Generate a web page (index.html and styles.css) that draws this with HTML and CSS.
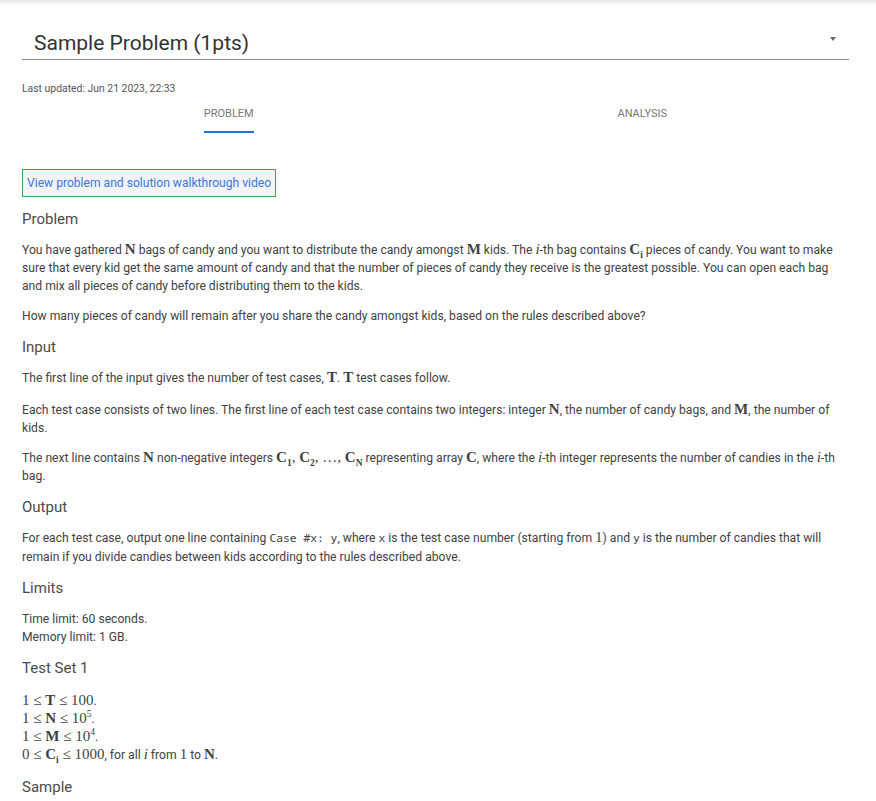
FILE: index.html
```html
<!DOCTYPE html>
<html lang="en">
<head>
<meta charset="utf-8">
<title>Sample Problem</title>
<link rel="stylesheet" href="styles.css">
</head>
<body>
<div class="topshade"></div>
<main class="page">
  <div class="select">
    <span class="select-text">Sample Problem (1pts)</span>
    <span class="select-arrow"></span>
  </div>
  <div class="updated">Last updated: Jun 21 2023, 22:33</div>
  <nav class="tabs">
    <div class="tab"><span class="tab-label active">PROBLEM</span></div>
    <div class="tab"><span class="tab-label">ANALYSIS</span></div>
  </nav>
  <section class="panel">
    <a class="video-link" href="#">View problem and solution walkthrough video</a>
    <h3>Problem</h3>
    <p>You have gathered <span class="m b">N</span> bags of candy and you want to distribute the candy amongst <span class="m b">M</span> kids. The <span class="m i">i</span>-th bag contains <span class="m b">C<sub>i</sub></span> pieces of candy. You want to make sure that every kid get the same amount of candy and that the number of pieces of candy they receive is the greatest possible. You can open each bag and mix all pieces of candy before distributing them to the kids.</p>
    <p>How many pieces of candy will remain after you share the candy amongst kids, based on the rules described above?</p>
    <h3>Input</h3>
    <p>The first line of the input gives the number of test cases, <span class="m b">T</span>. <span class="m b">T</span> test cases follow.</p>
    <p class="gap-lg">Each test case consists of two lines. The first line of each test case contains two integers: integer <span class="m b">N</span>, the number of candy bags, and <span class="m b">M</span>, the number of kids.</p>
    <p>The next line contains <span class="m b">N</span> non-negative integers <span class="m"><b>C<sub>1</sub></b>, <b>C<sub>2</sub></b>, …, <b>C<sub>N</sub></b></span> representing array <span class="m b">C</span>, where the <span class="m i">i</span>-th integer represents the number of candies in the <span class="m i">i</span>-th bag.</p>
    <h3>Output</h3>
    <p>For each test case, output one line containing <code>Case #x: y</code>, where <code>x</code> is the test case number (starting from <span class="m">1</span>) and <code>y</code> is the number of candies that will remain if you divide candies between kids according to the rules described above.</p>
    <h3>Limits</h3>
    <p>Time limit: 60 seconds.<br>Memory limit: 1 GB.</p>
    <h3>Test Set 1</h3>
    <p class="math-lines"><span class="m">1 ≤ <b>T</b> ≤ 100</span>.<br><span class="m">1 ≤ <b>N</b> ≤ 10<sup>5</sup></span>.<br><span class="m">1 ≤ <b>M</b> ≤ 10<sup>4</sup></span>.<br><span class="m">0 ≤ <b>C<sub>i</sub></b> ≤ 1000</span>, for all <span class="m i">i</span> from <span class="m">1</span> to <span class="m b">N</span>.</p>
    <h3>Sample</h3>
  </section>
</main>
</body>
</html>
```
FILE: styles.css
```css
html, body {
  margin: 0;
  padding: 0;
  background: #fff;
}
body {
  font-family: Roboto, "Liberation Sans", Arial, sans-serif;
  color: #424242;
}
.topshade {
  height: 6px;
  background: linear-gradient(#e6e6e6, #ffffff);
}
.page {
  padding: 0 27px 0 22px;
}
.select {
  display: flex;
  align-items: center;
  justify-content: space-between;
  margin-top: 25px;
  padding: 0 13px 4px 12px;
  border-bottom: 1px solid #8a8a8a;
}
.select-text {
  font-size: 21px;
  line-height: 24px;
  color: #333;
}
.select-arrow {
  width: 0;
  height: 0;
  border-left: 3.5px solid transparent;
  border-right: 3.5px solid transparent;
  border-top: 4px solid #666;
  margin-top: -8px;
}
.updated {
  margin-top: 23px;
  font-size: 10.4px;
  line-height: 12px;
  color: #555;
}
.tabs {
  display: flex;
  margin-top: 12px;
}
.tab {
  flex: 1;
  display: flex;
  justify-content: center;
}
.tab-label {
  display: block;
  font-size: 11px;
  line-height: 14px;
  color: #777;
  padding-bottom: 10px;
  border-bottom: 2px solid transparent;
}
.tab-label.active {
  border-bottom-color: #1a73e8;
}
.panel {
  padding-top: 36px;
  font-size: 12.15px;
  line-height: 18px;
}
.video-link {
  display: inline-block;
  vertical-align: top;
  padding: 4px 4px;
  border: 1px solid #34a853;
  background: #f1f3f4;
  color: #3b78e0;
  text-decoration: none;
  font-size: 12.1px;
  line-height: 18px;
}
h3 {
  font-size: 15px;
  line-height: 20px;
  font-weight: 400;
  color: #4a4a4a;
  margin: 12px 0;
}
p {
  margin: 12px 0;
}
p.gap-lg {
  margin-top: 13.5px;
}
.m {
  font-family: "Liberation Serif", "Times New Roman", serif;
  font-size: 15px;
  line-height: 0;
}
.b, .m b {
  font-weight: 700;
}
.i {
  font-style: italic;
}
sub, sup {
  font-size: 9.5px;
  line-height: 0;
}
code {
  font-family: "DejaVu Sans Mono", "Liberation Mono", monospace;
  font-size: 11.3px;
  white-space: pre;
}
.math-lines {
  line-height: 18.3px;
  margin: 14px 0 8px;
}
```
